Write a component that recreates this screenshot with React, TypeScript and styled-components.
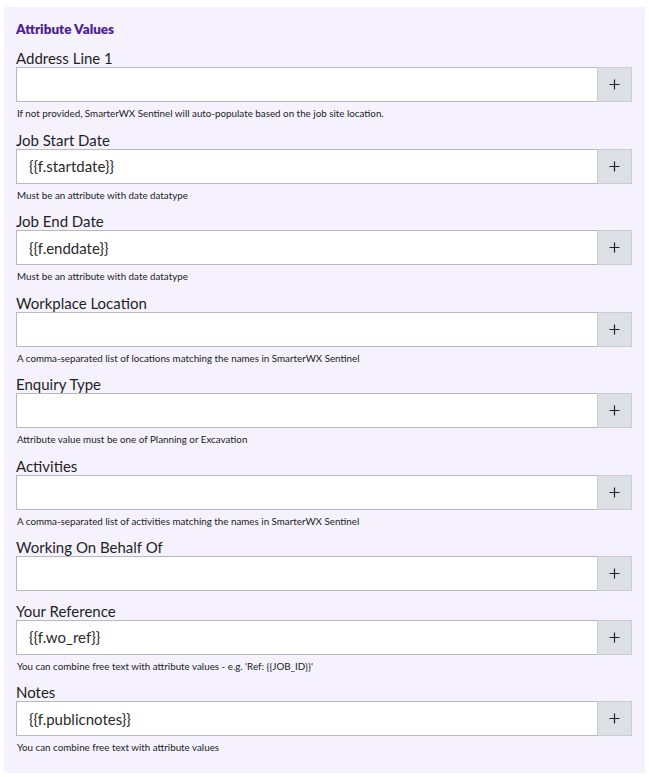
import React from 'react';
import styled, { createGlobalStyle } from 'styled-components';

const GlobalStyle = createGlobalStyle`
  body {
    margin: 0;
    background: #ffffff;
    font-family: Lato, "Noto Sans", sans-serif;
    color: #1f1f1f;
  }
`;

const Page = styled.div`
  padding: 7px 5px 5px 4px;
`;

const Panel = styled.section`
  background: #f5f2fe;
  padding: 13px 13px 8px 12px;
`;

const Title = styled.h3`
  margin: 0 0 11px;
  font-size: 13.5px;
  line-height: 18px;
  font-weight: 800;
  color: #4f1f94;
`;

const Field = styled.div`
  margin-bottom: 10.5px;
`;

const Label = styled.label`
  display: block;
  font-size: 15px;
  line-height: 18px;
  color: #1f1f1f;
`;

const InputGroup = styled.div`
  display: flex;
  height: 35px;
`;

const TextInput = styled.input`
  flex: 1;
  min-width: 0;
  box-sizing: border-box;
  height: 100%;
  border: 1px solid #b9b9bd;
  border-right: none;
  background: #ffffff;
  padding: 0 12px;
  font-family: Lato, "Noto Sans", sans-serif;
  font-size: 15px;
  color: #2a2a2a;
  outline: none;
`;

const AddButton = styled.button`
  width: 35px;
  box-sizing: border-box;
  height: 100%;
  border: 1px solid #c9cdd3;
  background: #dcdfe4;
  color: #222;
  padding: 0;
  display: flex;
  align-items: center;
  justify-content: center;
  cursor: pointer;
`;

const Help = styled.div`
  margin-top: 4px;
  padding-left: 1px;
  font-size: 9.8px;
  line-height: 14px;
  color: #222;
`;

type FieldDef = { label: string; value?: string; help?: string };

const fields: FieldDef[] = [
  { label: 'Address Line 1', help: 'If not provided, SmarterWX Sentinel will auto-populate based on the job site location.' },
  { label: 'Job Start Date', value: '{{f.startdate}}', help: 'Must be an attribute with date datatype' },
  { label: 'Job End Date', value: '{{f.enddate}}', help: 'Must be an attribute with date datatype' },
  { label: 'Workplace Location', help: 'A comma-separated list of locations matching the names in SmarterWX Sentinel' },
  { label: 'Enquiry Type', help: 'Attribute value must be one of Planning or Excavation' },
  { label: 'Activities', help: 'A comma-separated list of activities matching the names in SmarterWX Sentinel' },
  { label: 'Working On Behalf Of' },
  { label: 'Your Reference', value: '{{f.wo_ref}}', help: "You can combine free text with attribute values - e.g. 'Ref: {{JOB_ID}}'" },
  { label: 'Notes', value: '{{f.publicnotes}}', help: 'You can combine free text with attribute values' },
];

const PlusIcon = () => (
  <svg width="11" height="11" viewBox="0 0 11 11">
    <path d="M5.5 0.5v10M0.5 5.5h10" stroke="#222" strokeWidth="1.2" fill="none" />
  </svg>
);

export default function App() {
  return (
    <>
      <GlobalStyle />
      <Page>
        <Panel>
          <Title>Attribute Values</Title>
          {fields.map((f) => (
            <Field key={f.label}>
              <Label>{f.label}</Label>
              <InputGroup>
                <TextInput defaultValue={f.value ?? ''} />
                <AddButton type="button">
                  <PlusIcon />
                </AddButton>
              </InputGroup>
              {f.help && <Help>{f.help}</Help>}
            </Field>
          ))}
        </Panel>
      </Page>
    </>
  );
}
